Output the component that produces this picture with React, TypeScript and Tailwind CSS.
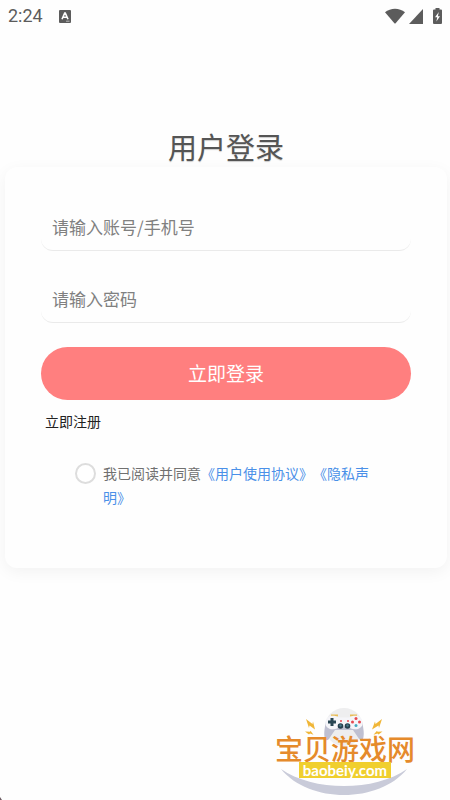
import { useState } from 'react';

function StatusBar() {
  return (
    <header className="flex h-8 items-center justify-between px-2 text-[#5c5c5c]">
      <div className="flex items-center gap-4">
        <time className="font-[Roboto,sans-serif] text-lg leading-8">2:24</time>
        <svg width="12" height="13" viewBox="0 0 12 13" aria-hidden="true">
          <rect width="12" height="13" rx="1" fill="currentColor" />
          <path d="M3 9.200 5.700 3h.6L9 9.200M4.100 7.200h3.800" fill="none" stroke="#fff" strokeWidth="1.600" />
          <path d="M7 11.200h3.500" stroke="#bbb" strokeWidth="1" />
        </svg>
      </div>
      <div className="flex items-center">
        <svg width="20" height="16" viewBox="0 0 20 16" aria-hidden="true">
          <path d="M0 4.300C5.500-.6 14.500-.6 20 4.300L10.600 15.300Q10 15.800 9.400 15.300Z" fill="currentColor" />
        </svg>
        <svg className="ml-1" width="14" height="15" viewBox="0 0 14 15" aria-hidden="true">
          <path d="M14 0v15H0Z" fill="currentColor" />
        </svg>
        <svg className="ml-2.5" width="9" height="16" viewBox="0 0 9 16" aria-hidden="true">
          <path d="M2.500 0h4v1.500H8q1 0 1 1V15q0 1-1 1H1q-1 0-1-1V2.500q0-1 1-1h1.500Z" fill="currentColor" />
          <path d="M5.800 4 2 9.300h2.200L3.400 13.500 7 8.300H4.900Z" fill="#fff" />
        </svg>
      </div>
    </header>
  );
}

function SiteLogo() {
  return (
    <div className="relative mr-[35px] mb-1 flex h-[90px] flex-col items-center justify-end self-end">
      <svg className="absolute inset-0" width="140" height="90" viewBox="0 0 140 90" aria-hidden="true">
        <circle cx="69" cy="21" r="19" fill="#eeeeef" />
        <path d="M6 63C38 85.700 100 85.700 132 63C104 97.700 34 97.700 6 63Z" fill="#c9cbd9" />
        <g fill="#f0b637">
          <path d="m31 13 6.500 5 .5-2.500 2 8-5.500-4-.5 2.500Z" />
          <path d="m107 13-6.500 5-.5-2.500-3 8 6.500-4 .5 2.500Z" />
          <path d="m30 25.500 5 .3.500-1 3 4-3.500-1.300-1 1ZM107.500 25.500l-5 .3-.5-1-3.500 4 4-1.300 1 1Z" />
        </g>
        <path d="M56 9.500h7M75 9.500h7" stroke="#e8bc56" strokeWidth="2" />
        <path
          d="M51 16Q48.500 26 49.500 31q1 5 4 2.500l6.500-9.500h18l6.500 9.500q3 2.500 4-2.500 1-5-1.500-15Z"
          fill="#bfc0d1"
        />
        <path
          d="M50.500 16C51.500 9 59 8.500 64 11.500h10c5-3 12.500-2.500 13.500 4.500 1 7-7 8.500-11.500 6.500l-2-2H64l-2 2c-4.500 2-12.500.5-11.500-6.500Z"
          fill="#f5f5f9"
        />
        <path d="M57 12v8M53 16h8" stroke="#294653" strokeWidth="3" />
        <circle cx="65.500" cy="20" r="2.800" fill="#263f4d" />
        <circle cx="72.500" cy="20" r="2.800" fill="#263f4d" />
        <circle cx="65.500" cy="19.500" r="1.200" fill="#47798a" />
        <circle cx="72.500" cy="19.500" r="1.200" fill="#47798a" />
        <circle cx="81" cy="12.500" r="1.500" fill="#e74950" />
        <circle cx="84.500" cy="16" r="1.500" fill="#e74950" />
        <circle cx="81" cy="19.500" r="1.500" fill="#44aac0" />
        <circle cx="77.500" cy="16" r="1.500" fill="#e74950" />
        <circle cx="66" cy="15" r="1" fill="#e74950" />
        <circle cx="73" cy="15" r="1" fill="#e74950" />
      </svg>
      <span className="relative text-[28px] leading-7 font-medium text-[#e58a2b]">宝贝游戏网</span>
      <span className="relative mb-[18px] bg-[#f0cf2e] px-1 font-[Lato,sans-serif] text-[15px] leading-4 font-bold text-white">
        baobeiy.com
      </span>
    </div>
  );
}

export default function App() {
  const [account, setAccount] = useState('');
  const [password, setPassword] = useState('');
  const [agreed, setAgreed] = useState(false);

  function handleSubmit(e: React.FormEvent) {
    e.preventDefault();
  }

  return (
    <div className="flex min-h-screen flex-col bg-[#fefefe] font-['Noto_Sans_CJK_SC',sans-serif]">
      <StatusBar />
      <main className="flex flex-col pt-24 pr-[3px] pl-[5px]">
        <h1 className="mb-[3px] text-center text-[29px] leading-9 text-[#555] text-shadow-xs">用户登录</h1>
        <form
          onSubmit={handleSubmit}
          className="flex flex-col rounded-xl bg-[#fefefe] px-9 pt-9 pb-[59px] shadow-[0_4px_16px_rgba(0,0,0,0.05)]"
        >
          <div className="flex flex-col gap-6">
            <input
              type="text"
              aria-label="请输入账号/手机号"
              placeholder="请输入账号/手机号"
              className="h-12 w-full rounded-xl border-b border-[#eaeaea] px-[11px] text-[17px] text-[#333] outline-none placeholder:text-[#808080]"
              value={account}
              onChange={(e) => setAccount(e.target.value)}
            />
            <input
              type="password"
              aria-label="请输入密码"
              placeholder="请输入密码"
              className="h-12 w-full rounded-xl border-b border-[#eaeaea] px-[11px] text-[17px] text-[#333] outline-none placeholder:text-[#808080]"
              value={password}
              onChange={(e) => setPassword(e.target.value)}
            />
            <button type="submit" className="h-[53px] w-full rounded-full bg-[#ff7f7f] text-[19px] text-white">
              立即登录
            </button>
          </div>
          <a href="#register" className="mt-[9px] self-start pl-1 text-sm leading-6 text-[#222]">
            立即注册
          </a>
          <div className="mt-7 flex items-start gap-[7px] px-[34px]">
            <input
              id="agree"
              type="checkbox"
              className="mt-0.5 size-[21px] shrink-0 appearance-none rounded-full border-2 border-[#ddd] bg-white checked:border-[#ff7f7f] checked:bg-[#ff7f7f]"
              checked={agreed}
              onChange={(e) => setAgreed(e.target.checked)}
            />
            <p className="text-sm leading-6 text-[#707070] [text-spacing-trim:space-all]">
              <label htmlFor="agree">我已阅读并同意</label>
              <a href="#terms" className="text-[#4a90e8]">《用户使用协议》</a>
              <a href="#privacy" className="text-[#4a90e8]">《隐私声明》</a>
            </p>
          </div>
        </form>
      </main>
      <footer className="relative mt-auto flex flex-col">
        <SiteLogo />
        <svg className="absolute bottom-0 left-0" width="2" height="3" viewBox="0 0 2 3" aria-hidden="true">
          <path d="M0 0 2 3H0Z" fill="#6b5a60" />
        </svg>
      </footer>
    </div>
  );
}
